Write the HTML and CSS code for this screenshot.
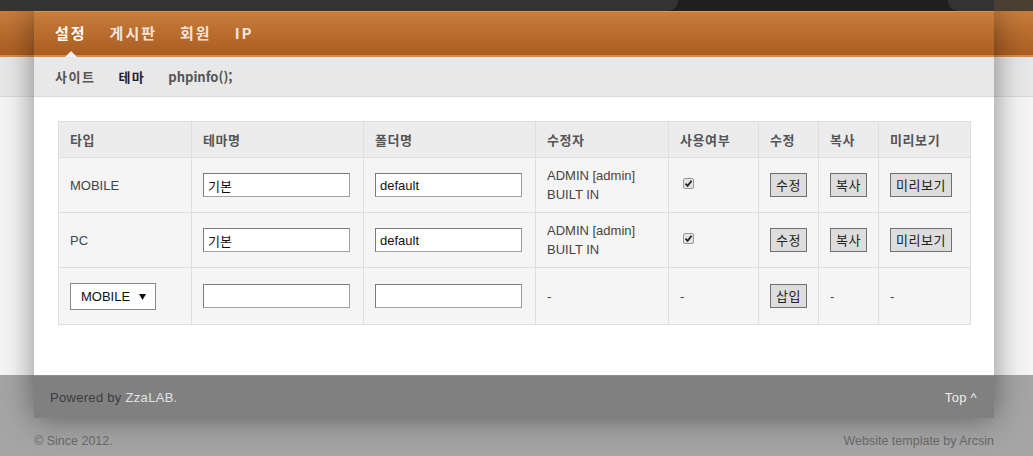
FILE: index.html
```html
<!DOCTYPE html>
<html lang="ko">
<head>
<meta charset="utf-8">
<title>테마 설정</title>
<link rel="stylesheet" href="styles.css">
</head>
<body>
<div class="topbar">
  <div class="topbar-inner">
    <div class="tb-left"></div>
    <div class="tb-gap"></div>
    <div class="tb-right"></div>
  </div>
</div>
<div class="page">
  <nav class="mainnav">
    <a class="mn-item active" href="#">설정</a>
    <a class="mn-item" href="#">게시판</a>
    <a class="mn-item" href="#">회원</a>
    <a class="mn-item" href="#">IP</a>
  </nav>
  <nav class="subnav">
    <a class="sn-item" href="#">사이트</a>
    <a class="sn-item active" href="#">테마</a>
    <a class="sn-item latin" href="#">phpinfo();</a>
  </nav>
  <main class="content">
    <table class="grid">
      <colgroup>
        <col class="c1"><col class="c2"><col class="c3"><col class="c4"><col class="c5"><col class="c6"><col class="c7"><col class="c8">
      </colgroup>
      <thead>
        <tr>
          <th>타입</th><th>테마명</th><th>폴더명</th><th>수정자</th><th>사용여부</th><th>수정</th><th>복사</th><th>미리보기</th>
        </tr>
      </thead>
      <tbody>
        <tr class="row">
          <td>MOBILE</td>
          <td><input class="field" type="text" value="기본"></td>
          <td><input class="field" type="text" value="default"></td>
          <td class="who">ADMIN [admin]<br>BUILT IN</td>
          <td><input class="check" type="checkbox" checked></td>
          <td><button class="btn" type="button">수정</button></td>
          <td><button class="btn" type="button">복사</button></td>
          <td><button class="btn" type="button">미리보기</button></td>
        </tr>
        <tr class="row">
          <td>PC</td>
          <td><input class="field" type="text" value="기본"></td>
          <td><input class="field" type="text" value="default"></td>
          <td class="who">ADMIN [admin]<br>BUILT IN</td>
          <td><input class="check" type="checkbox" checked></td>
          <td><button class="btn" type="button">수정</button></td>
          <td><button class="btn" type="button">복사</button></td>
          <td><button class="btn" type="button">미리보기</button></td>
        </tr>
        <tr class="row row-new">
          <td>
            <span class="select-wrap">
              <select class="select"><option>MOBILE</option><option>PC</option></select>
              <svg class="select-arrow" width="7" height="6" viewBox="0 0 7 6"><path d="M0 0H7L3.5 6Z" fill="#111"/></svg>
            </span>
          </td>
          <td><input class="field" type="text" value=""></td>
          <td><input class="field" type="text" value=""></td>
          <td>-</td>
          <td>-</td>
          <td><button class="btn" type="button">삽입</button></td>
          <td>-</td>
          <td>-</td>
        </tr>
      </tbody>
    </table>
  </main>
  <footer class="footbar">
    <span class="powered">Powered by <a href="#">ZzaLAB.</a></span>
    <a class="top-link" href="#">Top ^</a>
  </footer>
</div>
<div class="credits">
  <span>© Since 2012.</span>
  <span>Website template by Arcsin</span>
</div>
</body>
</html>
```
FILE: styles.css
```css
* { box-sizing: border-box; }

body {
  margin: 0;
  padding-right: 5px;
  font-family: "Liberation Sans", "Noto Sans CJK KR", sans-serif;
  color: #444;
  background-color: #a5a5a5;
  background-image: linear-gradient(to bottom,
    #333 0, #333 11px,
    #c77d3c 11px, #aa5d22 55px,
    #d88c4c 55px, #d88c4c 57px,
    #e8e8e8 57px, #e8e8e8 96px,
    #dadada 96px, #dadada 97px,
    #f5f5f5 97px, #f5f5f5 375px);
  background-size: 100% 375px;
  background-repeat: no-repeat;
  min-height: 456px;
}

a { text-decoration: none; }

.topbar {
  position: relative;
  z-index: 1;
  height: 11px;
  margin-right: -5px;
  padding-right: 5px;
  background: linear-gradient(to right, #333 calc(100% - 39px), #4a3d31 calc(100% - 39px));
}

.topbar-inner {
  width: 960px;
  height: 11px;
  margin: 0 auto;
  display: flex;
  background: linear-gradient(to right, #333 0, #333 634px, #1f1f1f 634px, #1f1f1f 924px, #333 924px);
}

.tb-left {
  width: 644px;
  background: #333;
  border-bottom-right-radius: 10px;
}

.tb-gap { width: 270px; }

.tb-right {
  flex: 1;
  background: #333;
  border-bottom-left-radius: 10px;
}

.page {
  width: 960px;
  margin: 0 auto;
  box-shadow: 0 0 30px rgba(0, 0, 0, 0.45);
}

.mainnav {
  height: 46px;
  display: flex;
  gap: 23px;
  padding-left: 21px;
  border-top: 1px solid #d5975d;
  border-bottom: 2px solid #d88c4c;
  background: linear-gradient(to bottom, #c77d3c, #aa5d22);
}

.mn-item {
  position: relative;
  font-family: "Noto Sans CJK KR", sans-serif;
  font-size: 15px;
  font-weight: 700;
  letter-spacing: 2px;
  line-height: 42px;
  color: #f6e4dc;
}

.mn-item.active { color: #fff; }

.mn-item.active::after {
  content: "";
  position: absolute;
  left: 10px;
  bottom: -2px;
  border-left: 6px solid transparent;
  border-right: 6px solid transparent;
  border-bottom: 6px solid #f2f2f2;
}

.subnav {
  height: 40px;
  display: flex;
  gap: 23px;
  padding-left: 21px;
  background: #e8e8e8;
  border-bottom: 1px solid #dadada;
}

.sn-item {
  font-family: "Noto Sans CJK KR", sans-serif;
  font-size: 13px;
  font-weight: 700;
  letter-spacing: 1.5px;
  line-height: 39px;
  color: #555;
}

.sn-item.latin { letter-spacing: 0; }

.sn-item.active { color: #1e1e38; }

.content {
  background: #fff;
  padding: 24px 24px 50px;
}

.grid {
  width: 912px;
  border-collapse: collapse;
  table-layout: fixed;
  font-size: 13px;
}

.c1 { width: 133px; }
.c2 { width: 172px; }
.c3 { width: 172px; }
.c4 { width: 133px; }
.c5 { width: 90px; }
.c6 { width: 60px; }
.c7 { width: 60px; }
.c8 { width: 92px; }

.grid th,
.grid td {
  border: 1px solid #dedede;
  padding: 0 0 0 11px;
  text-align: left;
  vertical-align: middle;
}

.grid th {
  height: 36px;
  background: #ececec;
  font-family: "Noto Sans CJK KR", sans-serif;
  font-size: 13px;
  font-weight: 700;
  letter-spacing: 0.6px;
  color: #555;
}

.grid td {
  background: #f5f5f5;
  color: #444;
  line-height: 19px;
}

.row { height: 55px; }
.row-new { height: 57px; }

.field {
  width: 147px;
  height: 24px;
  padding: 0 4px;
  margin: 0;
  border: 1px solid #a0a0a0;
  border-top-color: #7a7a7a;
  border-left-color: #7a7a7a;
  background: #fff;
  font-family: "Liberation Sans", "Noto Sans CJK KR", sans-serif;
  font-size: 13px;
  color: #111;
  vertical-align: middle;
}

.check {
  appearance: none;
  -webkit-appearance: none;
  width: 11px;
  height: 11px;
  margin: 0 0 6px 3px;
  border: 1px solid #9a9a9a;
  border-radius: 2px;
  vertical-align: middle;
  background: #e4e4e4 url("data:image/svg+xml,%3Csvg xmlns='http://www.w3.org/2000/svg' width='9' height='9' viewBox='0 0 9 9'%3E%3Cpath d='M1.5 4.6L3.6 6.8L7.6 1.8' fill='none' stroke='%23222' stroke-width='1.8'/%3E%3C/svg%3E") center / 9px 9px no-repeat;
}

.btn {
  height: 24px;
  padding: 0 5px;
  margin: 0;
  border: 1px solid #707070;
  border-radius: 0;
  background: #dddddd;
  font-family: "Noto Sans CJK KR", sans-serif;
  font-size: 13px;
  letter-spacing: 0.5px;
  line-height: 22px;
  color: #222;
  vertical-align: middle;
}

.select-wrap {
  position: relative;
  display: inline-block;
  vertical-align: middle;
}

.select {
  appearance: none;
  -webkit-appearance: none;
  width: 86px;
  height: 27px;
  margin: 0;
  padding: 0 0 0 10px;
  border: 1px solid #8a8a8a;
  border-radius: 0;
  background: #fff;
  font-family: "Liberation Sans", sans-serif;
  font-size: 13px;
  color: #111;
  display: block;
}

.select-arrow {
  position: absolute;
  right: 10px;
  top: 11px;
}

.footbar {
  height: 43px;
  display: flex;
  justify-content: space-between;
  align-items: center;
  padding: 0 17px 0 16px;
  background: #808080;
  border-top: 1px solid #8e8e8e;
  font-size: 13px;
  letter-spacing: 0.3px;
}

.powered { color: #3c3c3c; }
.powered a { color: #e2e2e2; }
.top-link { color: #eeeeee; }

.credits {
  width: 960px;
  margin: 0 auto;
  display: flex;
  justify-content: space-between;
  padding-top: 16px;
  font-size: 12.5px;
  color: #666;
}
```
